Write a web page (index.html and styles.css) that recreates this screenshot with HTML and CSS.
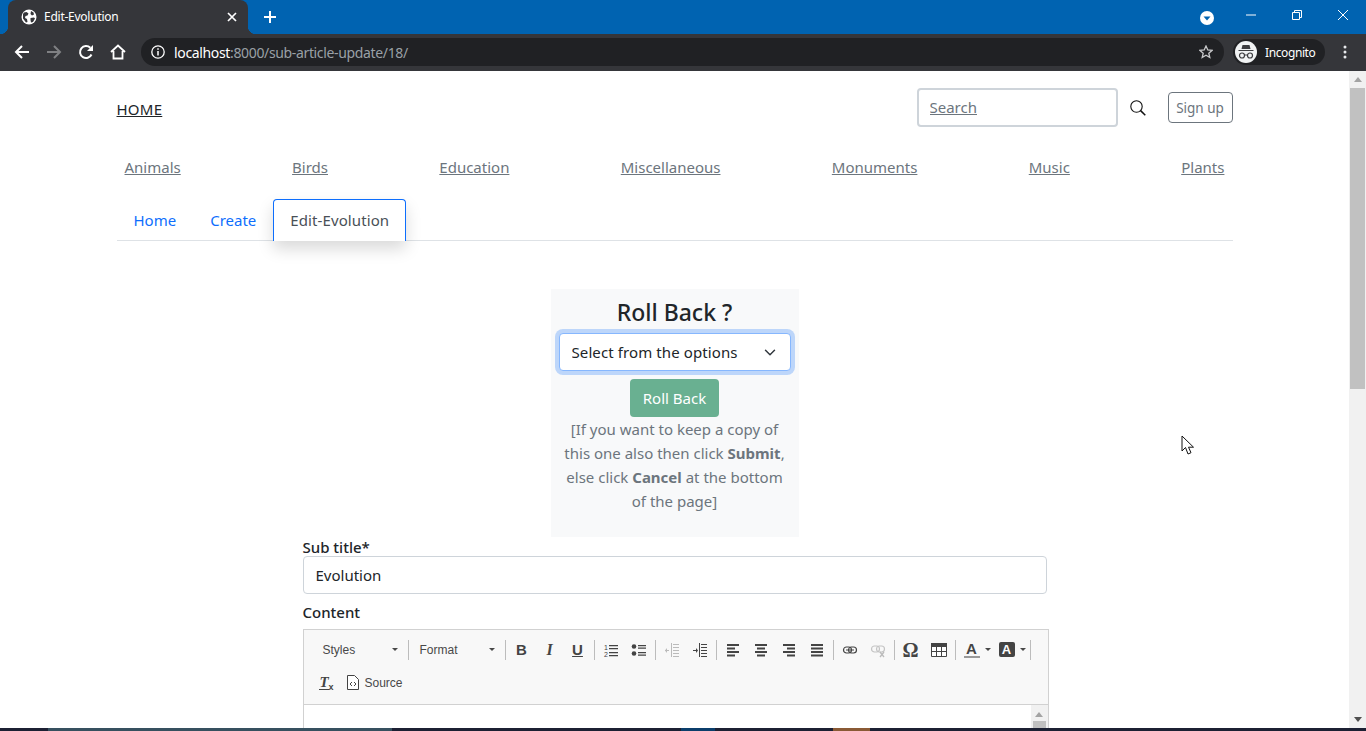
FILE: index.html
```html
<!DOCTYPE html>
<html>
<head>
<meta charset="UTF-8">
<title>Edit-Evolution</title>
<link rel="stylesheet" href="styles.css">
</head>
<body>
<div class="browser">

  <div class="tabstrip">
    <div class="tab">
      <svg class="tab-globe" width="16" height="16" viewBox="0 0 16 16"><circle cx="8" cy="8" r="7.5" fill="#fff"/><path d="M3 3.500l2.500-.5 2 1.500-1 2-2 .5-.5 2 2 1 .5 3-1.500.5-3-4V5zM10 2l2.500 1.500.5 2-2 1-1.500-1.500zM9.500 9l3.500-.5 1 1-2 3.500-2 .5-.5-2.500z" fill="#35363a"/></svg>
      <span class="tab-title">Edit-Evolution</span>
      <svg class="tab-close" width="10" height="10" viewBox="0 0 10 10"><path d="M1 1l8 8M9 1l-8 8" stroke="#fff" stroke-width="1.700"/></svg>
    </div>
    <svg class="newtab" width="12" height="12" viewBox="0 0 12 12"><path d="M6 0v12M0 6h12" stroke="#fff" stroke-width="2"/></svg>
    <div class="winctl">
      <svg class="tabsearch" width="14" height="14" viewBox="0 0 14 14"><circle cx="7" cy="7" r="7" fill="#fff"/><path d="M3.500 5.500h7L7 9.500z" fill="#0063b1"/></svg>
      <div class="winbtn"><svg width="10" height="10" viewBox="0 0 10 10"><path d="M0 5h10" stroke="#fff"/></svg></div>
      <div class="winbtn"><svg width="10" height="10" viewBox="0 0 10 10"><path d="M.5 2.500h7v7h-7zM2.500 2.500v-2h7v7h-2" fill="none" stroke="#fff"/></svg></div>
      <div class="winbtn"><svg width="10" height="10" viewBox="0 0 10 10"><path d="M0 0l10 10M10 0L0 10" stroke="#fff"/></svg></div>
    </div>
  </div>

  <div class="toolbar">
    <svg class="tool" width="16" height="16" viewBox="0 0 16 16"><path d="M15 8H2M8 2L2 8l6 6" fill="none" stroke="#fff" stroke-width="2"/></svg>
    <svg class="tool" width="16" height="16" viewBox="0 0 16 16"><path d="M1 8h13M8 2l6 6-6 6" fill="none" stroke="#7f8083" stroke-width="2"/></svg>
    <svg class="tool" width="16" height="16" viewBox="0 0 16 16"><path d="M13.500 10.500A6 6 0 1 1 12.300 3.800" fill="none" stroke="#fff" stroke-width="2"/><path d="M15 1v6H9z" fill="#fff"/></svg>
    <svg class="tool" width="16" height="16" viewBox="0 0 16 16"><path d="M1 8l7-6.500L15 8M3.500 7v7.500h9V7" fill="none" stroke="#fff" stroke-width="1.800"/></svg>
    <div class="omnibox">
      <svg class="info" width="14" height="14" viewBox="0 0 14 14"><circle cx="7" cy="7" r="6.200" fill="none" stroke="#fff" stroke-width="1.300"/><path d="M7 6v4.500M7 3.300v1.500" stroke="#fff" stroke-width="1.500"/></svg>
      <span class="url"><span class="host">localhost</span>:8000/sub-article-update/18/</span>
      <svg class="star" width="14" height="14" viewBox="0 0 14 14"><path d="M7 1l1.800 4 4.200.4-3.200 2.800 1 4.300L7 10.200 3.200 12.500l1-4.300L1 5.400 5.200 5z" fill="none" stroke="#c8c9cb" stroke-width="1.300"/></svg>
    </div>
    <div class="profile">
      <span class="avatar"><svg width="18" height="14" viewBox="0 0 18 14"><path d="M5.500 0h7l1 4h-9zM1.500 5h15v1h-15z" fill="#3c3d40"/><circle cx="5" cy="10.500" r="2.500" fill="none" stroke="#3c3d40" stroke-width="1.200"/><circle cx="13" cy="10.500" r="2.500" fill="none" stroke="#3c3d40" stroke-width="1.200"/><path d="M7.500 10h3" stroke="#3c3d40"/></svg></span>
      <span class="profile-name">Incognito</span>
    </div>
    <svg class="kebab" width="4" height="14" viewBox="0 0 4 14"><circle cx="2" cy="2" r="1.500" fill="#e8eaed"/><circle cx="2" cy="7" r="1.500" fill="#e8eaed"/><circle cx="2" cy="12" r="1.500" fill="#e8eaed"/></svg>
  </div>

  <div class="viewport">
    <div class="page">
      <div class="container">

        <div class="topbar">
          <a class="home-link" href="#">HOME</a>
          <div class="search-area">
            <input class="search-box" type="text" placeholder="Search">
            <svg class="search-icon" width="16" height="16" viewBox="0 0 16 16"><circle cx="6.500" cy="6.500" r="5.700" fill="none" stroke="#111" stroke-width="1.100"/><path d="M10.600 10.600l4.700 4.700" stroke="#111" stroke-width="1.500"/></svg>
            <a class="signup" href="#">Sign up</a>
          </div>
        </div>

        <div class="categories">
          <a href="#">Animals</a>
          <a href="#">Birds</a>
          <a href="#">Education</a>
          <a href="#">Miscellaneous</a>
          <a href="#">Monuments</a>
          <a href="#">Music</a>
          <a href="#">Plants</a>
        </div>

        <ul class="tabs">
          <li><a href="#">Home</a></li>
          <li><a href="#">Create</a></li>
          <li><a class="active" href="#">Edit-Evolution</a></li>
        </ul>

        <div class="rollback">
          <h4>Roll Back ?</h4>
          <select class="rollback-select">
            <option>Select from the options</option>
          </select>
          <button class="rollback-btn" type="button">Roll Back</button>
          <p>[If you want to keep a copy of this one also then click <b>Submit</b>, else click <b>Cancel</b> at the bottom of the page]</p>
        </div>

        <form class="edit-form">
          <label class="field-label first">Sub title*</label>
          <input class="field-input" type="text" value="Evolution">
          <label class="field-label">Content</label>

          <div class="cke">
            <div class="cke-top">
              <div class="cke-row">
                <span class="combo"><span>Styles</span><i class="caret"></i></span>
                <i class="sep"></i>
                <span class="combo second"><span>Format</span><i class="caret"></i></span>
                <i class="sep"></i>
                <span class="btn-ico glyph-b">B</span>
                <span class="btn-ico glyph-i">I</span>
                <span class="btn-ico glyph-u">U</span>
                <i class="sep"></i>
                <span class="btn-ico"><svg width="16" height="16" viewBox="0 0 16 16"><text x="1" y="7.500" class="mini">1</text><text x="1" y="14.500" class="mini">2</text><path d="M6 3h9v1.300H6zM6 6h9v1.300H6zM6 10h9v1.300H6zM6 13h9v1.300H6z" fill="#444"/></svg></span>
                <span class="btn-ico"><svg width="16" height="16" viewBox="0 0 16 16"><circle cx="3" cy="4.500" r="2.300" fill="#444"/><circle cx="3" cy="11.500" r="2.300" fill="#444"/><path d="M7 3h8v1.300H7zM7 5.500h8v1.300H7zM7 10h8v1.300H7zM7 12.500h8v1.300H7z" fill="#444"/></svg></span>
                <i class="sep"></i>
                <span class="btn-ico"><svg width="16" height="16" viewBox="0 0 16 16"><path d="M9 2h6v1H9zM9 5h6v1H9zM9 8h6v1H9zM9 11h6v1H9zM9 14h6v1H9zM7 1h1v14H7zM1 8h4v1H1z" fill="#bbb"/><path d="M3 6L1 8.500 3 11z" fill="#bbb"/></svg></span>
                <span class="btn-ico"><svg width="16" height="16" viewBox="0 0 16 16"><path d="M9 2h6v1H9zM9 5h6v1H9zM9 8h6v1H9zM9 11h6v1H9zM9 14h6v1H9zM7 1h1v14H7zM1 8h3v1H1z" fill="#444"/><path d="M4 6l2 2.500L4 11z" fill="#444"/></svg></span>
                <i class="sep"></i>
                <span class="btn-ico"><svg width="16" height="16" viewBox="0 0 16 16"><path d="M2 2h12v2H2zM2 5.500h8v2H2zM2 9h12v2H2zM2 12.500h8v2H2z" fill="#444"/></svg></span>
                <span class="btn-ico"><svg width="16" height="16" viewBox="0 0 16 16"><path d="M2 2h12v2H2zM4 5.500h8v2H4zM2 9h12v2H2zM4 12.500h8v2H4z" fill="#444"/></svg></span>
                <span class="btn-ico"><svg width="16" height="16" viewBox="0 0 16 16"><path d="M2 2h12v2H2zM6 5.500h8v2H6zM2 9h12v2H2zM6 12.500h8v2H6z" fill="#444"/></svg></span>
                <span class="btn-ico"><svg width="16" height="16" viewBox="0 0 16 16"><path d="M2 2h12v2H2zM2 5.500h12v2H2zM2 9h12v2H2zM2 12.500h12v2H2z" fill="#444"/></svg></span>
                <i class="sep"></i>
                <span class="btn-ico"><svg width="16" height="16" viewBox="0 0 16 16"><rect x="1.500" y="5" width="8" height="6" rx="3" fill="none" stroke="#444" stroke-width="1.200"/><rect x="6.500" y="5" width="8" height="6" rx="3" fill="none" stroke="#444" stroke-width="1.200"/><path d="M4 8h8" stroke="#444"/></svg></span>
                <span class="btn-ico"><svg width="16" height="16" viewBox="0 0 16 16"><rect x="1.500" y="4" width="8" height="6" rx="3" fill="none" stroke="#c4c4c4" stroke-width="1.200"/><rect x="6.500" y="4" width="8" height="6" rx="3" fill="none" stroke="#c4c4c4" stroke-width="1.200"/><path d="M10 10l4 5M14 10l-4 5" stroke="#bbb" stroke-width="1.300"/></svg></span>
                <i class="sep"></i>
                <span class="btn-ico glyph-omega">Ω</span>
                <span class="btn-ico"><svg width="16" height="16" viewBox="0 0 16 16"><path d="M.5 1.500h15v13H.5z" fill="#fff" stroke="#444"/><path d="M0 1h16v4H0z" fill="#444"/><path d="M5.500 5v9M10.500 5v9M1 9.500h14" stroke="#444"/></svg></span>
                <i class="sep"></i>
                <span class="btn-ico wide"><span class="glyph-a">A</span><i class="caret"></i></span>
                <span class="btn-ico wide"><span class="glyph-abg">A</span><i class="caret"></i></span>
                <i class="sep"></i>
              </div>
              <div class="cke-row">
                <span class="btn-ico glyph-tx"><span>T</span><sub>x</sub></span>
                <span class="source-btn">
                  <svg width="12" height="15" viewBox="0 0 12 15"><path d="M.5.500h7l4 4v10H.5z" fill="#fff" stroke="#444"/><path d="M5 7L3 9l2 2M7 7l2 2-2 2" fill="none" stroke="#444"/></svg>
                  <span>Source</span>
                </span>
              </div>
            </div>
            <div class="cke-body">
              <div class="cke-scroll">
                <i class="arrow-up small"></i>
                <i class="cke-thumb"></i>
              </div>
            </div>
          </div>
        </form>

      </div>
    </div>
    <div class="scrollbar">
      <i class="arrow-up"></i>
      <i class="thumb"></i>
      <i class="arrow-down"></i>
    </div>
  </div>

  <div class="taskbar">
    <i class="seg-a"></i>
    <i class="seg-b"></i>
    <i class="seg-a grow1"></i>
    <i class="seg-c"></i>
    <i class="seg-a grow2"></i>
    <i class="seg-d"></i>
    <i class="seg-a grow3"></i>
  </div>

  <svg class="cursor" width="14" height="21" viewBox="0 0 14 21"><path d="M1 1v15l3.500-3.500L7 19l3-1.300-2.500-5.500h5z" fill="#fff" stroke="#111"/></svg>
</div>
</body>
</html>
```

FILE: styles.css
```css
* {box-sizing: border-box;}
html, body {margin: 0; height: 100%; overflow: hidden;}
body {font-family: "Noto Sans", "Liberation Sans", sans-serif; font-size: 15px; line-height: 24px; color: #212529; background: #fff;}
a {color: inherit;}

.browser {position: relative; display: flex; flex-direction: column; height: 731px;}

/* window frame */
.tabstrip {display: flex; align-items: center; height: 34px; flex: none; background: #0063b1; padding-left: 8px;}
.tab {position: relative; display: flex; align-items: center; width: 240px; height: 34px; padding: 0 11px 1px 13px; background: #35363a; border-radius: 8px 8px 0 0; color: #fff;}
.tab::before, .tab::after {content: ""; position: absolute; bottom: 0; width: 8px; height: 8px;}
.tab::before {left: -8px; background: radial-gradient(circle at 0 0, transparent 8px, #35363a 8.5px);}
.tab::after {right: -8px; background: radial-gradient(circle at 100% 0, transparent 8px, #35363a 8.5px);}
.tab-title {flex: 1; margin-left: 7px; font: 12px "Noto Sans", sans-serif; letter-spacing: -0.25px;}
.newtab {margin-left: 16px;}
.winctl {display: flex; align-items: center; margin-left: auto;}
.tabsearch {margin-right: 14px; margin-top: 1px;}
.winbtn {display: flex; justify-content: center; width: 46px; margin-bottom: 5px;}
.winbtn svg {display: block;}

.toolbar {display: flex; align-items: center; height: 37px; flex: none; background: #35363a; padding: 0 0 1px 14px;}
.tool {flex: none; margin-right: 16px;}
.tool:nth-child(4) {margin-right: 15px;}
.omnibox {display: flex; align-items: center; width: 1083px; height: 28px; padding: 0 11px 0 10px; background: #202124; border-radius: 14px;}
.url {flex: 1; margin-left: 9px; font: 14px "Noto Sans", sans-serif; letter-spacing: -0.35px; color: #9aa0a6;}
.host {color: #fff;}
.profile {display: flex; align-items: center; width: 92px; height: 26px; margin-left: 9px; padding-left: 2px; background: #202124; border-radius: 13px;}
.avatar {display: flex; align-items: center; justify-content: center; width: 22px; height: 22px; border-radius: 50%; background: #f1f3f4;}
.profile-name {margin-left: 8px; font: 12px "Noto Sans", sans-serif; letter-spacing: -0.4px; color: #fff;}
.kebab {margin-left: 18px;}

/* page area */
.viewport {display: flex; flex: 1; min-height: 0;}
.page {flex: 1; min-width: 0; overflow: hidden;}
.container {width: 1116px; margin: 0 auto;}

.topbar {display: flex; justify-content: space-between; align-items: flex-start; padding-top: 17px;}
.home-link {margin-top: 9px; color: #212529; font-size: 15px; letter-spacing: .25px;}
.search-area {display: flex; align-items: center;}
.search-box {width: 201px; height: 39px; padding: 0 12px 2px 11px; border: 2px solid #ced4da; border-radius: 4px; font: 15px "Noto Sans", sans-serif;}
.search-box::placeholder {color: #6c757d; text-decoration: underline; opacity: 1;}
.search-icon {margin-left: 12px;}
.signup {display: block; margin-left: 22px; width: 65px; height: 31px; border: 1px solid #6c757d; border-radius: 4px; text-align: center; font-size: 13.500px; line-height: 30px; color: #6c757d; text-decoration: none;}

.categories {display: flex; justify-content: space-between; margin-top: 28px; padding: 0 8px;}
.categories a {color: #6c757d;}

.tabs {display: flex; margin: 20px 0 0; padding: 0; height: 42px; list-style: none; border-bottom: 1px solid #dee2e6;}
.tabs a {display: block; height: 42px; padding: 9px 17px; color: #0d6efd; text-decoration: none;}
.tabs a.active {background: #fff; color: #495057; border: 1px solid #0d6efd; border-bottom: 0; border-radius: 4px 4px 0 0; padding: 8px 16px; letter-spacing: .1px; box-shadow: 0 8px 16px rgba(0,0,0,.15);}

.rollback {width: 248px; margin: 48px auto 0; padding: 8px 0 24px; background: #f8f9fa; text-align: center; color: #6c757d;}
.rollback h4 {margin: 0; font-size: 23px; line-height: 30px; font-weight: 500; color: #212529;}
.rollback-select {display: block; width: 232px; height: 38px; margin: 6px auto 0; padding: 0 36px 0 12px; appearance: none; font: 15px "Noto Sans", sans-serif; letter-spacing: .1px; color: #212529; border: 1px solid #86b7fe; border-radius: 4px; box-shadow: 0 0 0 4px rgba(13,110,253,.25); background: #fff url("data:image/svg+xml,%3csvg xmlns='http://www.w3.org/2000/svg' viewBox='0 0 16 12'%3e%3cpath fill='none' stroke='%23343a40' stroke-linecap='round' stroke-linejoin='round' stroke-width='2' d='M2 3l6 6 6-6'/%3e%3c/svg%3e") no-repeat right 14px center / 12px 9px;}
.rollback-btn {display: block; width: 89px; height: 38px; margin: 8px auto 0; padding: 0; border: 0; border-radius: 4px; background: #69b091; color: #fff; font: 15px "Noto Sans", sans-serif;}
.rollback p {margin: 0; padding: 0 10px;}
.rollback b {font-weight: 700;}

.edit-form {width: 744px; margin-left: 186px;}
.field-label {display: block; height: 19px; font-weight: 500; line-height: 20px; color: #212529; margin-top: 8px;}
.field-label.first {margin-top: 0; line-height: 21px;}
.field-input {display: block; width: 100%; height: 38px; padding: 0 12px; border: 1px solid #ced4da; border-radius: 4px; font: 15px "Noto Sans", sans-serif; color: #212529;}

/* editor */
.cke {width: 746px; margin-top: 8px; border: 1px solid #d1d1d1; border-bottom: 0;}
.cke-top {height: 75px; padding: 3px 0 0 11px; background: #f8f8f8; border-bottom: 1px solid #d1d1d1; font-family: "Liberation Sans", sans-serif; font-size: 12px; color: #484848;}
.cke-row {display: flex; align-items: center; height: 33px;}
.combo {display: flex; align-items: center; justify-content: space-between; width: 91.5px; padding: 0 8px;}
.combo.second {padding-left: 8.5px;}
.sep {display: block; width: 1px; height: 20px; margin: 0 2px; background: #bcbcbc;}
.caret {display: block; width: 0; height: 0; border: 3px solid transparent; border-top: 3px solid #484848; border-bottom: 0;}
.btn-ico {display: flex; align-items: center; justify-content: center; width: 28px; height: 24px; flex: none;}
.btn-ico.wide {width: 35px; justify-content: flex-start; padding-left: 6px;}
.btn-ico.wide .caret {margin-left: 5px;}
.mini {font: 7px "Liberation Sans", sans-serif; fill: #444;}
.glyph-b, .glyph-i, .glyph-u {font: bold 15px "Liberation Sans", sans-serif; color: #444;}
.glyph-i {font: italic bold 16px "Liberation Serif", serif;}
.glyph-u {text-decoration: underline;}
.glyph-omega {font: bold 20px "Liberation Serif", serif; color: #444; padding-top: 2px;}
.glyph-a {width: 16px; text-align: center; font: bold 15px/15px "Liberation Sans", sans-serif; color: #444; border-bottom: 2px solid #999;}
.glyph-abg {width: 16px; height: 15px; text-align: center; font: bold 13px/15px "Liberation Sans", sans-serif; color: #fff; background: #444; border-radius: 2px;}
.glyph-tx {width: 26px; padding-right: 2px; font: italic bold 15px "Liberation Serif", serif; color: #444;}
.glyph-tx span {border-bottom: 1px solid #444; line-height: 13px;}
.glyph-tx sub {font: bold 9px "Liberation Sans", sans-serif; margin-top: 8px;}
.source-btn {display: flex; align-items: center; margin-left: 6px;}
.source-btn span {margin-left: 6px;}
.cke-body {display: flex; justify-content: flex-end; height: 60px; background: #fff;}
.cke-scroll {width: 17px; padding-top: 7px; background: #f1f1f1;}
.cke-thumb {display: block; width: 13px; height: 40px; margin: 4px auto 0; background: #c1c1c1;}

.scrollbar {display: flex; flex-direction: column; align-items: center; flex: none; width: 17px; padding: 6px 0; background: #f1f1f1;}
.arrow-up {display: block; width: 0; height: 0; margin: 0 auto; border: 4px solid transparent; border-bottom: 5px solid #a3a3a3; border-top: 0;}
.arrow-up.small {border-bottom-color: #a3a3a3;}
.arrow-down {display: block; width: 0; height: 0; margin-top: auto; border: 4px solid transparent; border-top: 5px solid #505050; border-bottom: 0;}
.thumb {display: block; width: 15px; height: 301px; margin-top: 6px; background: #c1c1c1;}

.taskbar {display: flex; flex: none; height: 3px; background: #1c2033;}
.taskbar i {display: block; height: 3px;}
.seg-a {width: 48px; background: #1c2033;}
.seg-b {width: 344px; background: #36505f;}
.seg-a.grow1 {width: 289px;}
.seg-c {width: 34px; background: #0b3e6b;}
.seg-a.grow2 {width: 118px;}
.seg-d {width: 37px; background: #8a5a35;}
.seg-a.grow3 {flex: 1;}

.cursor {position: absolute; left: 1181px; top: 435px;}
```
